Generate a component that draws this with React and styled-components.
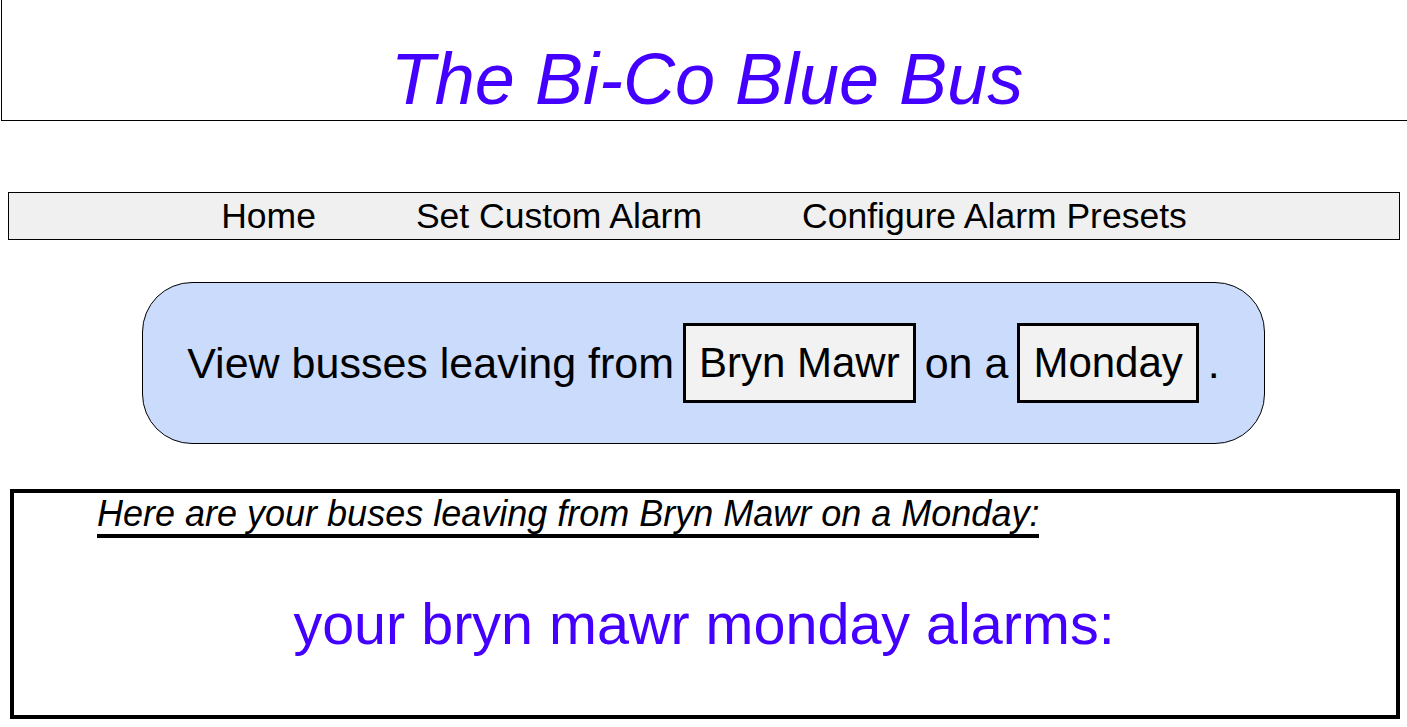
import React from "react";
import styled, { createGlobalStyle } from "styled-components";

const Global = createGlobalStyle`
  html, body { margin: 0; padding: 0; background: #fff; overflow: hidden; }
  body { font-family: "Liberation Sans", Arial, Helvetica, sans-serif; color: #000; }
`;

const Page = styled.div`
  display: flex;
  flex-direction: column;
`;

const Header = styled.header`
  margin-left: 1px;
  padding-top: 39px;
  padding-left: 5px;
  border-left: 1px solid #000;
  border-bottom: 1px solid #000;
  display: flex;
  justify-content: center;
`;

const Title = styled.h1`
  margin: 0;
  font-size: 72px;
  line-height: 81px;
  font-weight: normal;
  font-style: italic;
  color: #4400ff;
`;

const Nav = styled.nav`
  margin: 71px 7px 0 8px;
  height: 48px;
  box-sizing: border-box;
  padding-top: 3px;
  border: 1px solid #000;
  background: #f0f0f0;
  display: flex;
  justify-content: center;
  gap: 100px;
`;

const NavLink = styled.a`
  font-size: 35.5px;
  line-height: 40px;
  color: #000;
  text-decoration: none;
  cursor: pointer;
`;

const Picker = styled.div`
  margin: 42px auto 0;
  width: 1123px;
  height: 162px;
  box-sizing: border-box;
  border: 1px solid #000;
  border-radius: 50px;
  background: #cbdbfc;
  display: flex;
  align-items: center;
  justify-content: center;
  gap: 9px;
  font-size: 43px;
`;

const Words = styled.span`
  white-space: nowrap;
`;

const Choice = styled.span`
  display: inline-block;
  padding: 12px 13px;
  border: 3px solid #000;
  background: #f2f2f2;
  font-size: 42px;
  line-height: 50px;
`;

const Results = styled.section`
  margin: 45px 7px 0 10px;
  height: 230px;
  box-sizing: border-box;
  border: 4px solid #000;
  padding-left: 83px;
  display: flex;
  flex-direction: column;
`;

const ResultsHeading = styled.h3`
  margin: 0;
  align-self: flex-start;
  font-size: 36px;
  font-weight: normal;
  font-style: italic;
  border-bottom: 4px solid #000;
  line-height: 41px;
`;

const Alarms = styled.h2`
  margin: 53px 85px 0 0;
  text-align: center;
  font-size: 57.5px;
  font-weight: normal;
  line-height: 66px;
  color: #4400ff;
`;

export default function App() {
  return (
    <Page>
      <Global />
      <Header>
        <Title>The Bi-Co Blue Bus</Title>
      </Header>
      <Nav>
        <NavLink>Home</NavLink>
        <NavLink>Set Custom Alarm</NavLink>
        <NavLink>Configure Alarm Presets</NavLink>
      </Nav>
      <Picker>
        <Words>View busses leaving from</Words>
        <Choice>Bryn Mawr</Choice>
        <Words>on a</Words>
        <Choice>Monday</Choice>
        <Words>.</Words>
      </Picker>
      <Results>
        <ResultsHeading>Here are your buses leaving from Bryn Mawr on a Monday:</ResultsHeading>
        <Alarms>your bryn mawr monday alarms:</Alarms>
      </Results>
    </Page>
  );
}
